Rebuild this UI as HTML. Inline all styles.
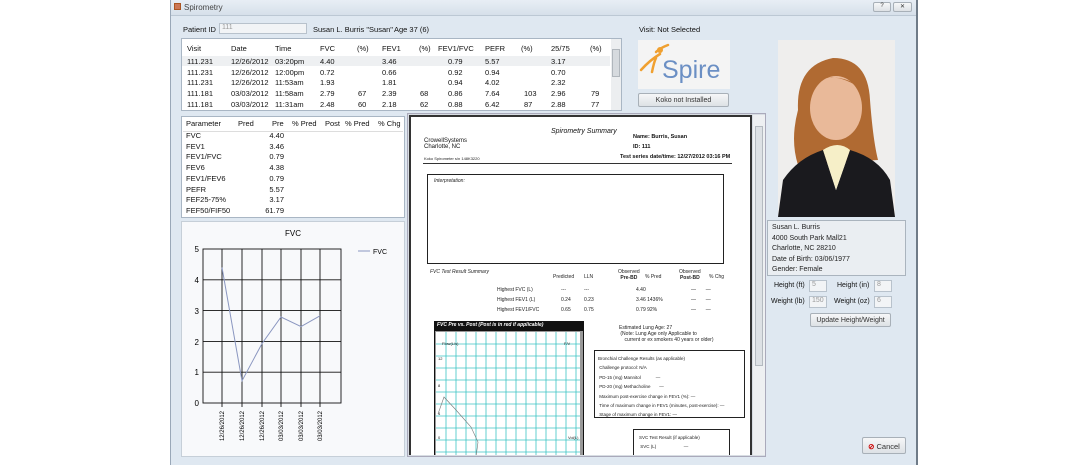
<!DOCTYPE html>
<html><head><meta charset="utf-8"><style>
*{margin:0;padding:0;box-sizing:border-box}
body{width:1089px;height:465px;background:#fff;position:relative;overflow:hidden;font-family:"Liberation Sans",sans-serif;font-size:7px;color:#111}
.a{position:absolute}
.win{left:170px;top:0;width:748px;height:465px;background:#dfe8f1;border-left:1px solid #9aa8b8;border-right:2px solid #6f7b88}
.box{background:#fff;border:1px solid #a9b6c4}
.t div{position:absolute;white-space:nowrap;font-size:7.5px}
.inp{background:#f2f4f6;border:1px solid #b8c2cc;color:#999;font-size:7px;padding-left:2px}
.btn{background:linear-gradient(#f6f7f8,#dde1e5);border:1px solid #a8b0b8;text-align:center;font-size:7px;color:#333;border-radius:2px}
.bl{border:1px solid #222}
.rp{font-size:5px;color:#222}
</style></head><body>
<div class="a win"></div>
<div class="a" style="left:171px;top:0;width:745px;height:16px;background:linear-gradient(#e8eef5,#d6e0ea);border-bottom:1px solid #bcc8d4"></div>
<div class="a" style="left:174px;top:3px;width:7px;height:7px;background:#c75;border:1px solid #a52"></div>
<div class="a" style="left:184px;top:3px;font-size:8px;color:#444">Spirometry</div>
<div class="a btn" style="left:873px;top:2px;width:18px;height:10px;font-size:6px">?</div>
<div class="a btn" style="left:893px;top:2px;width:19px;height:10px;font-size:6px">✕</div>

<div class="a" style="left:183px;top:25px;font-size:7.5px">Patient ID</div>
<div class="a inp" style="left:219px;top:23px;width:88px;height:11px">111</div>
<div class="a" style="left:313px;top:25px;font-size:7.5px">Susan L. Burris "Susan"</div>
<div class="a" style="left:394px;top:25px;font-size:7.5px">Age 37 (6)</div>
<div class="a" style="left:639px;top:25px;font-size:7.5px">Visit: Not Selected</div>

<div class="a box" style="left:181px;top:38px;width:441px;height:73px"></div>
<div class="a" style="left:182px;top:56px;width:428px;height:10px;background:#eef0f2"></div>
<div class="a t" style="left:0;top:0">
<div style="left:187px;top:44px">Visit</div><div style="left:231px;top:44px">Date</div><div style="left:275px;top:44px">Time</div><div style="left:320px;top:44px">FVC</div><div style="left:357px;top:44px">(%)</div><div style="left:382px;top:44px">FEV1</div><div style="left:419px;top:44px">(%)</div><div style="left:438px;top:44px">FEV1/FVC</div><div style="left:485px;top:44px">PEFR</div><div style="left:521px;top:44px">(%)</div><div style="left:551px;top:44px">25/75</div><div style="left:590px;top:44px">(%)</div>
<div style="left:187px;top:57px;line-height:10.7px">111.231<br>111.231<br>111.231<br>111.181<br>111.181</div>
<div style="left:231px;top:57px;line-height:10.7px">12/26/2012<br>12/26/2012<br>12/26/2012<br>03/03/2012<br>03/03/2012</div>
<div style="left:275px;top:57px;line-height:10.7px">03:20pm<br>12:00pm<br>11:53am<br>11:58am<br>11:31am</div>
<div style="left:320px;top:57px;line-height:10.7px">4.40<br>0.72<br>1.93<br>2.79<br>2.48</div>
<div style="left:358px;top:57px;line-height:10.7px"><br><br><br>67<br>60</div>
<div style="left:382px;top:57px;line-height:10.7px">3.46<br>0.66<br>1.81<br>2.39<br>2.18</div>
<div style="left:420px;top:57px;line-height:10.7px"><br><br><br>68<br>62</div>
<div style="left:448px;top:57px;line-height:10.7px">0.79<br>0.92<br>0.94<br>0.86<br>0.88</div>
<div style="left:485px;top:57px;line-height:10.7px">5.57<br>0.94<br>4.02<br>7.64<br>6.42</div>
<div style="left:524px;top:57px;line-height:10.7px"><br><br><br>103<br>87</div>
<div style="left:551px;top:57px;line-height:10.7px">3.17<br>0.70<br>2.32<br>2.96<br>2.88</div>
<div style="left:591px;top:57px;line-height:10.7px"><br><br><br>79<br>77</div>
</div>
<div class="a" style="left:611px;top:39px;width:10px;height:71px;background:#eceef0"><div style="margin:10px 1px;height:28px;background:#d6dade;border:1px solid #b0b6bc"></div></div>

<div class="a box" style="left:181px;top:116px;width:224px;height:102px"></div>
<div class="a" style="left:183px;top:131px;width:220px;height:1px;background:#ddd"></div>
<div class="a t">
<div style="left:186px;top:119px">Parameter</div><div style="left:238px;top:119px">Pred</div><div style="left:272px;top:119px">Pre</div><div style="left:292px;top:119px">% Pred</div><div style="left:325px;top:119px">Post</div><div style="left:345px;top:119px">% Pred</div><div style="left:378px;top:119px">% Chg</div>
<div style="left:186px;top:131px;line-height:10.7px">FVC<br>FEV1<br>FEV1/FVC<br>FEV6<br>FEV1/FEV6<br>PEFR<br>FEF25-75%<br>FEF50/FIF50</div>
<div style="left:262px;top:131px;line-height:10.7px;width:22px;text-align:right">4.40<br>3.46<br>0.79<br>4.38<br>0.79<br>5.57<br>3.17<br>61.79</div>
</div>

<div class="a" style="left:181px;top:221px;width:224px;height:236px;background:#f8f9fb;border:1px solid #c6cfd8"></div>
<svg class="a" style="left:181px;top:221px" width="224" height="236">
<text x="112" y="15" font-size="8" text-anchor="middle" font-family="Liberation Sans">FVC</text>
<g stroke="#111" stroke-width="0.9" fill="none">
<rect x="22" y="28" width="138" height="154"/>
<line x1="22" y1="58.8" x2="160" y2="58.8"/><line x1="22" y1="89.6" x2="160" y2="89.6"/><line x1="22" y1="120.4" x2="160" y2="120.4"/><line x1="22" y1="151.2" x2="160" y2="151.2"/>
<line x1="41" y1="28" x2="41" y2="186"/><line x1="61" y1="28" x2="61" y2="186"/><line x1="81" y1="28" x2="81" y2="186"/><line x1="100" y1="28" x2="100" y2="186"/><line x1="120" y1="28" x2="120" y2="186"/><line x1="139" y1="28" x2="139" y2="186"/>
</g>
<g font-size="8" font-family="Liberation Sans" text-anchor="end"><text x="18" y="31">5</text><text x="18" y="62">4</text><text x="18" y="93">3</text><text x="18" y="124">2</text><text x="18" y="154">1</text><text x="18" y="185">0</text></g>
<polyline fill="none" stroke="#8a96c0" stroke-width="1" points="41,46.5 61,159.8 81,122.6 100,96 120,105.6 139,94.8"/>
<line x1="177" y1="30" x2="189" y2="30" stroke="#8a96c0"/><text x="192" y="33" font-size="7" font-family="Liberation Sans">FVC</text>
<g font-size="6" font-family="Liberation Sans" text-anchor="end">
<text transform="translate(43,190) rotate(-90)">12/26/2012</text><text transform="translate(63,190) rotate(-90)">12/26/2012</text><text transform="translate(83,190) rotate(-90)">12/26/2012</text><text transform="translate(102,190) rotate(-90)">03/03/2012</text><text transform="translate(122,190) rotate(-90)">03/03/2012</text><text transform="translate(141,190) rotate(-90)">03/03/2012</text></g>
</svg>

<!-- report -->
<div class="a" style="left:407px;top:113px;width:359px;height:344px;background:#d8dde3;border:1px solid #aab"></div>
<div class="a" style="left:409px;top:115px;width:343px;height:340px;background:#fff;border:2px solid #333;border-bottom:none;overflow:hidden">
<div class="a" style="left:140px;top:11px;font-size:7px;font-style:italic">Spirometry Summary</div>
<div class="a" style="left:13px;top:21px;font-size:6px">CrowellSystems<br>Charlotte, NC</div>
<div class="a" style="left:222px;top:17px;font-size:5.5px;font-weight:bold">Name: Burris, Susan</div>
<div class="a" style="left:222px;top:27px;font-size:5.5px;font-weight:bold">ID: 111</div>
<div class="a rp" style="left:13px;top:39px;font-size:4px">Koko Spirometer s/n 148K3220</div>
<div class="a" style="left:209px;top:37px;font-size:5.5px;font-weight:bold">Test series date/time: 12/27/2012 03:16 PM</div>
<div class="a" style="left:12px;top:46px;width:309px;height:1px;background:#333"></div>
<div class="a bl" style="left:16px;top:57px;width:297px;height:90px"><div class="rp" style="margin:3px 6px;font-style:italic">Interpretation:</div></div>
<div class="a rp" style="left:19px;top:152px;font-style:italic;font-size:5px">FVC Test Result Summary</div>
<div class="a rp" style="left:142px;top:157px">Predicted</div><div class="a rp" style="left:173px;top:157px">LLN</div>
<div class="a rp" style="left:207px;top:152px;text-align:center">Observed<br><b>Pre-BD</b></div><div class="a rp" style="left:234px;top:157px">% Pred</div>
<div class="a rp" style="left:268px;top:152px;text-align:center">Observed<br><b>Post-BD</b></div><div class="a rp" style="left:298px;top:157px">% Chg</div>
<div class="a rp" style="left:86px;top:168px;line-height:10px">Highest FVC (L)<br>Highest FEV1 (L)<br>Highest FEV1/FVC</div>
<div class="a rp" style="left:150px;top:168px;line-height:10px">---<br>0.24<br>0.65</div>
<div class="a rp" style="left:173px;top:168px;line-height:10px">---<br>0.23<br>0.75</div>
<div class="a rp" style="left:225px;top:168px;line-height:10px">4.40<br>3.46 1436%<br>0.79 92%</div>
<div class="a rp" style="left:280px;top:168px;line-height:10px">—&nbsp;&nbsp;&nbsp;&nbsp;&nbsp;&nbsp;&nbsp;—<br>—&nbsp;&nbsp;&nbsp;&nbsp;&nbsp;&nbsp;&nbsp;—<br>—&nbsp;&nbsp;&nbsp;&nbsp;&nbsp;&nbsp;&nbsp;—</div>
<div class="a" style="left:23px;top:204px;width:150px;height:9px;background:#111;color:#fff;font-size:5px;font-style:italic;font-weight:bold;padding:1px 3px">FVC Pre vs. Post (Post is in red if applicable)</div>
<div class="a" style="left:23px;top:213px;width:150px;height:130px;background:#999;border:1px solid #111"></div>
<svg class="a" style="left:25px;top:215px" width="144" height="125">
<rect width="144" height="125" fill="#fff"/>
<g stroke="#3cc4c4" stroke-width="0.8">
<line x1="10" y1="0" x2="10" y2="125"/><line x1="20" y1="0" x2="20" y2="125"/><line x1="30" y1="0" x2="30" y2="125"/><line x1="40" y1="0" x2="40" y2="125"/><line x1="50" y1="0" x2="50" y2="125"/><line x1="60" y1="0" x2="60" y2="125"/><line x1="70" y1="0" x2="70" y2="125"/><line x1="80" y1="0" x2="80" y2="125"/><line x1="90" y1="0" x2="90" y2="125"/><line x1="100" y1="0" x2="100" y2="125"/><line x1="110" y1="0" x2="110" y2="125"/><line x1="120" y1="0" x2="120" y2="125"/><line x1="130" y1="0" x2="130" y2="125"/><line x1="140" y1="0" x2="140" y2="125"/>
<line x1="0" y1="12" x2="144" y2="12"/><line x1="0" y1="24" x2="144" y2="24"/><line x1="0" y1="36" x2="144" y2="36"/><line x1="0" y1="48" x2="144" y2="48"/><line x1="0" y1="60" x2="144" y2="60"/><line x1="0" y1="72" x2="144" y2="72"/><line x1="0" y1="84" x2="144" y2="84"/><line x1="0" y1="96" x2="144" y2="96"/><line x1="0" y1="108" x2="144" y2="108"/><line x1="0" y1="120" x2="144" y2="120"/>
</g>
<g font-size="4" font-family="Liberation Sans" fill="#222"><text x="6" y="13">Flow(L/s)</text><text x="128" y="13">F/V</text><text x="2" y="28">12</text><text x="2" y="55">8</text><text x="2" y="83">4</text><text x="2" y="107">0</text><text x="132" y="107">Vol(L)</text></g>
<polyline fill="none" stroke="#777" stroke-width="0.6" points="2,82 8,65 20,78 35,95 42,110 40,125"/>
</svg>
<div class="a rp" style="left:208px;top:208px;line-height:6px">Estimated Lung Age: 27<br>&nbsp;(Note: Lung Age only Applicable to<br>&nbsp;&nbsp;&nbsp;&nbsp;current or ex smokers 40 years or older)</div>
<div class="a bl" style="left:183px;top:233px;width:151px;height:68px"><div class="rp" style="margin:3px 3px;line-height:9.4px;font-size:4.5px">Bronchial Challenge Results (as applicable)<br>&nbsp;Challenge protocol: N/A<br>&nbsp;PD-15 (mg) Mannitol &nbsp;&nbsp;&nbsp;&nbsp;&nbsp;&nbsp;&nbsp;&nbsp;&nbsp;&nbsp;&nbsp;—<br>&nbsp;PD-20 (mg) Methacholine &nbsp;&nbsp;&nbsp;&nbsp;&nbsp;&nbsp;—<br>&nbsp;Maximum post-exercise change in FEV1 (%): —<br>&nbsp;Time of maximum change in FEV1 (minutes, post-exercise): —<br>&nbsp;Stage of maximum change in FEV1: —</div></div>
<div class="a bl" style="left:222px;top:312px;width:97px;height:40px"><div class="rp" style="margin:3px 5px;line-height:9px;font-size:4.5px">SVC Test Result (if applicable)<br>&nbsp;SVC (L) &nbsp;&nbsp;&nbsp;&nbsp;&nbsp;&nbsp;&nbsp;&nbsp;&nbsp;&nbsp;&nbsp;&nbsp;&nbsp;&nbsp;&nbsp;&nbsp;&nbsp;&nbsp;&nbsp;&nbsp;&nbsp;—</div></div>
</div>
<div class="a" style="left:753px;top:115px;width:12px;height:340px;background:#eef0f2"><div style="margin:11px 2px;height:240px;background:#dde1e5;border:1px solid #b4bac0"></div></div>

<!-- logo -->
<div class="a" style="left:638px;top:40px;width:92px;height:49px;background:#f4f4f4"></div>
<svg class="a" style="left:638px;top:40px" width="92" height="49">
<path d="M3 30 Q12 20 22 14 M14 32 Q16 22 18 18 M18 12 Q22 8 30 5" stroke="#f0a030" stroke-width="2.5" fill="none" stroke-linecap="round"/>
<circle cx="22" cy="10" r="3" fill="#f0a030"/>
<text x="24" y="38" font-size="25" fill="#6b8fc4" font-family="Liberation Sans">Spire</text>
</svg>
<div class="a btn" style="left:638px;top:93px;width:91px;height:14px;padding-top:3px">Koko not Installed</div>

<!-- photo -->
<svg class="a" style="left:778px;top:40px" width="117" height="177">
<rect width="117" height="177" fill="#efeeed"/>
<path d="M20 70 Q18 25 55 18 Q90 18 92 60 Q95 100 100 120 L20 125 Q12 100 20 70Z" fill="#b06a32"/>
<ellipse cx="58" cy="68" rx="26" ry="32" fill="#e9b999"/>
<path d="M30 50 Q50 25 85 50 Q70 35 45 38Z" fill="#b06a32"/>
<path d="M0 177 L5 140 Q20 118 45 110 L58 150 L72 110 Q100 118 112 140 L117 177Z" fill="#1a1a1e"/>
<path d="M45 110 L58 150 L72 110 Q60 100 45 110Z" fill="#f6efc8"/>
</svg>

<div class="a" style="left:767px;top:220px;width:139px;height:56px;background:#eaeef2;border:1px solid #aab4be;padding:2px 4px;font-size:7px;line-height:10.6px;color:#222">Susan L. Burris<br>4000 South Park Mall21<br>Charlotte, NC 28210<br>Date of Birth: 03/06/1977<br>Gender: Female</div>
<div class="a" style="left:774px;top:282px">Height (ft)</div><div class="a inp" style="left:809px;top:280px;width:18px;height:12px">5</div>
<div class="a" style="left:837px;top:282px">Height (in)</div><div class="a inp" style="left:874px;top:280px;width:18px;height:12px">8</div>
<div class="a" style="left:771px;top:298px">Weight (lb)</div><div class="a inp" style="left:809px;top:296px;width:18px;height:12px">150</div>
<div class="a" style="left:834px;top:298px">Weight (oz)</div><div class="a inp" style="left:874px;top:296px;width:18px;height:12px">6</div>
<div class="a btn" style="left:810px;top:313px;width:81px;height:14px;padding-top:3px">Update Height/Weight</div>
<div class="a btn" style="left:862px;top:437px;width:44px;height:17px;padding-top:4px;font-size:7.5px"><span style="color:#c00;font-weight:bold">⊘</span> Cancel</div>
</body></html>
